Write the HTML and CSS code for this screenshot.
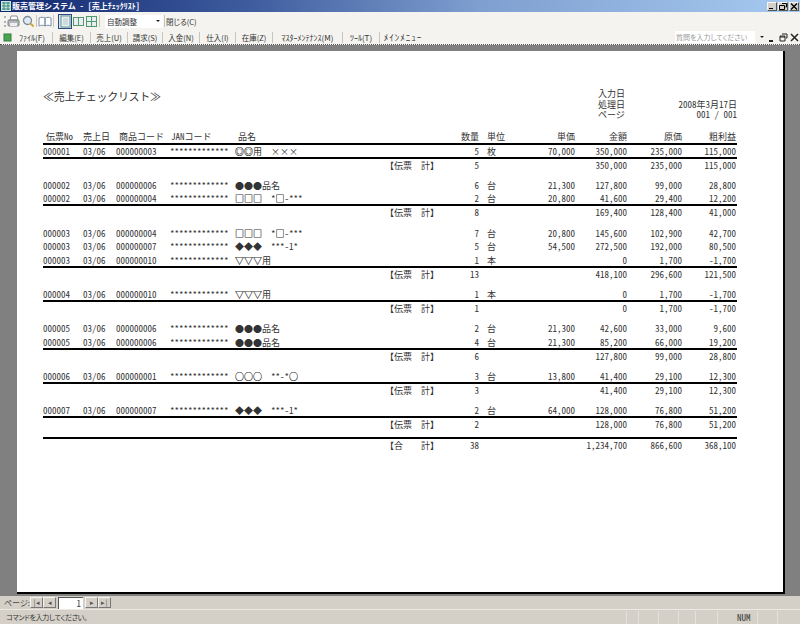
FILE: index.html
```html
<!DOCTYPE html>
<html lang="ja">
<head>
    <meta charset="UTF-8">
    <link rel="stylesheet" href="styles.css">
</head>
<body>
<div class="window">

    <div class="titlebar">
        <svg class="app-icon" width="10" height="10" viewBox="0 0 10 10"><rect width="10" height="10" fill="#cfe3d8"/><path d="M1 2h8M1 5h8M1 8h8M3 1v8M7 1v8" stroke="#2f8f7f"/></svg>
        <span class="title-text">販売管理システム － [売上ﾁｪｯｸﾘｽﾄ]</span>
        <div class="win-btns">
            <span class="win-btn"><svg width="8" height="7" viewBox="0 0 8 7"><path d="M1 5h4v1H1z" fill="#000"/></svg></span>
            <span class="win-btn"><svg width="8" height="7" viewBox="0 0 8 7"><path d="M3 .5h4.500v3.500H6.500M.5 2.500h5v4h-5z" fill="none" stroke="#000"/></svg></span>
            <span class="win-btn"><svg width="8" height="7" viewBox="0 0 8 7"><path d="M1 .5l6 6M7 .5l-6 6" stroke="#000" stroke-width="1.300"/></svg></span>
        </div>
    </div>

    <div class="toolbar">
        <span class="grip"></span>
        <svg width="13" height="13" viewBox="0 0 13 13"><path d="M4 1h6l1 4H3z" fill="#fff" stroke="#8a8f98"/><rect x="1" y="5" width="11" height="6" rx="1" fill="#b4b9c0" stroke="#7b8087"/><rect x="3" y="8" width="7" height="3" fill="#eeeeee"/><path d="M9 6h2" stroke="#5fc05f"/></svg>
        <svg class="tool-zoom" width="13" height="13" viewBox="0 0 13 13"><circle cx="5.500" cy="5.500" r="4" fill="#dfeaf6" stroke="#7d8a9a" stroke-width="1.300"/><path d="M8.500 8.500l3 3" stroke="#d9a531" stroke-width="2"/></svg>
        <span class="tool-sep"></span>
        <svg width="14" height="13" viewBox="0 0 14 13"><path d="M1 3c2-1 4-1 6 0v8c-2-1-4-1-6 0zM7 3c2-1 4-1 6 0v8c-2-1-4-1-6 0z" fill="#fff" stroke="#7c8ea8"/></svg>
        <span class="tool-sep"></span>
        <span class="tool-active"><svg width="11" height="13" viewBox="0 0 11 13"><rect x="1" y="1" width="9" height="11" fill="#e8eef2" stroke="#5b9a86"/><rect x="3" y="3" width="5" height="7" fill="#cfd9e0"/></svg></span>
        <svg width="13" height="13" viewBox="0 0 13 13"><rect x="1" y="2" width="11" height="9" fill="#4f9a6f"/><rect x="2" y="3" width="4" height="7" fill="#e8eef2"/><rect x="7" y="3" width="4" height="7" fill="#e8eef2"/></svg>
        <svg width="13" height="13" viewBox="0 0 13 13"><rect x="1" y="1" width="11" height="11" fill="#4f9a6f"/><rect x="2" y="2" width="4" height="4" fill="#e8eef2"/><rect x="7" y="2" width="4" height="4" fill="#e8eef2"/><rect x="2" y="7" width="4" height="4" fill="#e8eef2"/><rect x="7" y="7" width="4" height="4" fill="#e8eef2"/></svg>
        <span class="tool-sep"></span>
        <span class="zoom-box"><span class="zoom-value">自動調整</span><span class="zoom-arrow"></span></span>
        <span class="tool-sep"></span>
        <span class="tool-text">閉じる(C)</span>
    </div>

    <div class="menubar">
        <svg width="9" height="9" viewBox="0 0 9 9"><rect x="1" y="1" width="7" height="7" fill="#49a64f" stroke="#2f7d3a"/></svg>
        <span class="menu-item kana m-file">ﾌｧｲﾙ(F)</span><span class="menu-sep"></span>
        <span class="menu-item m-edit">編集(E)</span><span class="menu-sep"></span>
        <span class="menu-item m-sales">売上(U)</span><span class="menu-sep"></span>
        <span class="menu-item m-bill">請求(S)</span><span class="menu-sep"></span>
        <span class="menu-item m-sales">入金(N)</span><span class="menu-sep"></span>
        <span class="menu-item m-buy">仕入(I)</span><span class="menu-sep"></span>
        <span class="menu-item m-sales">在庫(Z)</span><span class="menu-sep"></span>
        <span class="menu-item kana m-master">ﾏｽﾀｰﾒﾝﾃﾅﾝｽ(M)</span><span class="menu-sep"></span>
        <span class="menu-item kana m-sales">ﾂｰﾙ(T)</span><span class="menu-sep"></span>
        <span class="menu-item m-main">ﾒｲﾝﾒﾆｭｰ</span>
        <div class="help">
            <span class="help-box">質問を入力してください</span>
            <span class="help-arrow"></span>
            <svg width="9" height="9" viewBox="0 0 9 9"><path d="M1 7h4v2H1z" fill="#222"/></svg>
            <svg width="9" height="9" viewBox="0 0 9 9"><path d="M3 1h5v4H7M1 3h5v5H1zM1 4h5" fill="none" stroke="#222"/></svg>
            <svg width="9" height="9" viewBox="0 0 9 9"><path d="M1 1l7 7M8 1l-7 7" stroke="#222" stroke-width="1.500"/></svg>
        </div>
    </div>

    <div class="viewer">
        <div class="paper">
            <div class="report-head">
                <div class="report-title">≪売上チェックリスト≫</div>
                <div class="report-meta">
                    <div class="meta-row"><span>入力日</span></div>
                    <div class="meta-row"><span>処理日</span><span>2008年3月17日</span></div>
                    <div class="meta-row"><span>ページ</span><span>001 / 001</span></div>
                </div>
            </div>

            <div class="row head">
                <span class="c-no">伝票No</span><span class="c-date">売上日</span><span class="c-code">商品コード</span><span class="c-jan">JANコード</span><span class="c-name">品名</span><span></span><span class="r">数量</span><span class="c-unit">単位</span><span class="r">単価</span><span class="r">金額</span><span class="r">原価</span><span class="r">粗利益</span>
            </div>
            <div class="rule first"></div>

            <div class="group">
                <div class="row"><span>000001</span><span>03/06</span><span>000000003</span><span>*************</span><span><span class="sym">◎◎</span>用<span class="zen">　</span>×××</span><span></span><span class="r">5</span><span class="c-unit">枚</span><span class="r">70,000</span><span class="r">350,000</span><span class="r">235,000</span><span class="r">115,000</span></div>
                <div class="rule"></div>
                <div class="row"><span></span><span></span><span></span><span></span><span></span><span>【伝票<span class="zen">　</span>計】</span><span class="r">5</span><span></span><span></span><span class="r">350,000</span><span class="r">235,000</span><span class="r">115,000</span></div>
            </div>

            <div class="group">
                <div class="row"><span>000002</span><span>03/06</span><span>000000006</span><span>*************</span><span>●●●品名</span><span></span><span class="r">6</span><span class="c-unit">台</span><span class="r">21,300</span><span class="r">127,800</span><span class="r">99,000</span><span class="r">28,800</span></div>
                <div class="row"><span>000002</span><span>03/06</span><span>000000004</span><span>*************</span><span><span class="sym">□□□</span><span class="zen">　</span>*<span class="sym">□</span>-***</span><span></span><span class="r">2</span><span class="c-unit">台</span><span class="r">20,800</span><span class="r">41,600</span><span class="r">29,400</span><span class="r">12,200</span></div>
                <div class="rule"></div>
                <div class="row"><span></span><span></span><span></span><span></span><span></span><span>【伝票<span class="zen">　</span>計】</span><span class="r">8</span><span></span><span></span><span class="r">169,400</span><span class="r">128,400</span><span class="r">41,000</span></div>
            </div>

            <div class="group">
                <div class="row"><span>000003</span><span>03/06</span><span>000000004</span><span>*************</span><span><span class="sym">□□□</span><span class="zen">　</span>*<span class="sym">□</span>-***</span><span></span><span class="r">7</span><span class="c-unit">台</span><span class="r">20,800</span><span class="r">145,600</span><span class="r">102,900</span><span class="r">42,700</span></div>
                <div class="row"><span>000003</span><span>03/06</span><span>000000007</span><span>*************</span><span>◆◆◆<span class="zen">　</span>***-1*</span><span></span><span class="r">5</span><span class="c-unit">台</span><span class="r">54,500</span><span class="r">272,500</span><span class="r">192,000</span><span class="r">80,500</span></div>
                <div class="row"><span>000003</span><span>03/06</span><span>000000010</span><span>*************</span><span><span class="sym">▽▽▽</span>用</span><span></span><span class="r">1</span><span class="c-unit">本</span><span></span><span class="r">0</span><span class="r">1,700</span><span class="r">-1,700</span></div>
                <div class="rule"></div>
                <div class="row"><span></span><span></span><span></span><span></span><span></span><span>【伝票<span class="zen">　</span>計】</span><span class="r">13</span><span></span><span></span><span class="r">418,100</span><span class="r">296,600</span><span class="r">121,500</span></div>
            </div>

            <div class="group">
                <div class="row"><span>000004</span><span>03/06</span><span>000000010</span><span>*************</span><span><span class="sym">▽▽▽</span>用</span><span></span><span class="r">1</span><span class="c-unit">本</span><span></span><span class="r">0</span><span class="r">1,700</span><span class="r">-1,700</span></div>
                <div class="rule"></div>
                <div class="row"><span></span><span></span><span></span><span></span><span></span><span>【伝票<span class="zen">　</span>計】</span><span class="r">1</span><span></span><span></span><span class="r">0</span><span class="r">1,700</span><span class="r">-1,700</span></div>
            </div>

            <div class="group">
                <div class="row"><span>000005</span><span>03/06</span><span>000000006</span><span>*************</span><span>●●●品名</span><span></span><span class="r">2</span><span class="c-unit">台</span><span class="r">21,300</span><span class="r">42,600</span><span class="r">33,000</span><span class="r">9,600</span></div>
                <div class="row"><span>000005</span><span>03/06</span><span>000000006</span><span>*************</span><span>●●●品名</span><span></span><span class="r">4</span><span class="c-unit">台</span><span class="r">21,300</span><span class="r">85,200</span><span class="r">66,000</span><span class="r">19,200</span></div>
                <div class="rule"></div>
                <div class="row"><span></span><span></span><span></span><span></span><span></span><span>【伝票<span class="zen">　</span>計】</span><span class="r">6</span><span></span><span></span><span class="r">127,800</span><span class="r">99,000</span><span class="r">28,800</span></div>
            </div>

            <div class="group">
                <div class="row"><span>000006</span><span>03/06</span><span>000000001</span><span>*************</span><span><span class="sym">○○○</span><span class="zen">　</span>**-*<span class="sym">○</span></span><span></span><span class="r">3</span><span class="c-unit">台</span><span class="r">13,800</span><span class="r">41,400</span><span class="r">29,100</span><span class="r">12,300</span></div>
                <div class="rule"></div>
                <div class="row"><span></span><span></span><span></span><span></span><span></span><span>【伝票<span class="zen">　</span>計】</span><span class="r">3</span><span></span><span></span><span class="r">41,400</span><span class="r">29,100</span><span class="r">12,300</span></div>
            </div>

            <div class="group">
                <div class="row"><span>000007</span><span>03/06</span><span>000000007</span><span>*************</span><span>◆◆◆<span class="zen">　</span>***-1*</span><span></span><span class="r">2</span><span class="c-unit">台</span><span class="r">64,000</span><span class="r">128,000</span><span class="r">76,800</span><span class="r">51,200</span></div>
                <div class="rule"></div>
                <div class="row"><span></span><span></span><span></span><span></span><span></span><span>【伝票<span class="zen">　</span>計】</span><span class="r">2</span><span></span><span></span><span class="r">128,000</span><span class="r">76,800</span><span class="r">51,200</span></div>
            </div>

            <div class="rule"></div>
            <div class="row"><span></span><span></span><span></span><span></span><span></span><span>【合<span class="zen">　　</span>計】</span><span class="r">38</span><span></span><span></span><span class="r">1,234,700</span><span class="r">866,600</span><span class="r">368,100</span></div>
        </div>
    </div>

    <div class="pager">
        <span class="pager-label">ページ:</span>
        <span class="page-btn">|◂</span><span class="page-btn">◂</span>
        <span class="page-input">1</span>
        <span class="page-btn">▸</span><span class="page-btn">▸|</span>
    </div>

    <div class="statusbar">
        <span class="status-text">コマンドを入力してください。</span>
        <span class="status-cell s-12"></span>
        <span class="status-cell s-20"></span>
        <span class="status-cell s-20"></span>
        <span class="status-cell s-17"></span>
        <span class="status-cell s-22"></span>
        <span class="status-cell s-num">NUM</span>
        <span class="status-cell s-20"></span>
        <span class="status-cell s-20"></span>
    </div>

</div>
</body>
</html>
```

FILE: styles.css
```css
* {
    box-sizing: border-box;
}

body {
    margin: 0;
    font-family: "Noto Sans CJK JP", "Liberation Sans", sans-serif;
    font-size: 9px;
    font-feature-settings: "hwid";
    color: #333;
    background-color: #808080;
}

.window {
    width: 800px;
    height: 624px;
    display: flex;
    flex-direction: column;
    overflow: hidden;
}

/* Title bar */
.titlebar {
    height: 12px;
    display: flex;
    align-items: center;
    padding-left: 1px;
    background: linear-gradient(to right, #11276f 0%, #3c5a9c 30%, #7f9fd0 60%, #a6caf0 100%);
    color: #ffffff;
    line-height: 12px;
}

.app-icon {
    margin-right: 1px;
}

.title-text {
    font-size: 8px;
    font-weight: 700;
    white-space: nowrap;
}

.win-btns {
    margin-left: auto;
    display: flex;
    gap: 1px;
    padding-right: 1px;
}

.win-btn {
    width: 10px;
    height: 9px;
    background-color: #d4d0c8;
    border: 1px solid;
    border-color: #f5f4f1 #555 #555 #f5f4f1;
    display: flex;
    align-items: center;
    justify-content: center;
}

/* Toolbars */
.toolbar {
    height: 18px;
    display: flex;
    align-items: center;
    background-color: #f4f3ef;
    padding-left: 4px;
}

.grip {
    width: 2px;
    height: 11px;
    margin-right: 1px;
    border-left: 2px dotted #b5b2a8;
}

.tool-zoom {
    margin-left: 2px;
}

.tool-sep {
    width: 1px;
    height: 12px;
    background-color: #c8c5bb;
    margin: 0 1px;
}

.tool-active {
    width: 14px;
    height: 15px;
    border: 1px solid #2c4a86;
    background-color: #d8dfea;
    display: flex;
    align-items: center;
    justify-content: center;
    margin-left: 3px;
}

.zoom-box {
    width: 58px;
    height: 13px;
    background-color: #ffffff;
    display: flex;
    align-items: center;
    padding-left: 2px;
    margin-left: 4px;
}

.zoom-value {
    font-size: 7.5px;
}

.zoom-arrow {
    margin-left: auto;
    margin-right: 3px;
    border-left: 2px solid transparent;
    border-right: 2px solid transparent;
    border-top: 2px solid #222;
}

.tool-text {
    font-size: 7.5px;
    font-feature-settings: "palt";
}

.menubar {
    height: 15px;
    display: flex;
    align-items: center;
    background-color: #f4f3ef;
    border-bottom: 1px dotted #555;
    padding-left: 3px;
    white-space: nowrap;
}

.menu-item {
    font-size: 7.5px;
    font-feature-settings: "palt";
    text-align: center;
}

.kana {
    font-size: 8px;
    font-feature-settings: normal;
}

.m-file {
    width: 40px;
}

.m-edit {
    width: 37px;
}

.m-sales {
    width: 36px;
}

.m-bill {
    width: 34px;
}

.m-buy {
    width: 35px;
}

.m-master {
    width: 69px;
}

.m-main {
    width: 46px;
    font-size: 9px;
    letter-spacing: 1px;
}

.menu-sep {
    width: 1px;
    height: 11px;
    background-color: #c8c5bb;
}

.help {
    margin-left: auto;
    display: flex;
    align-items: center;
    gap: 2px;
    padding-right: 1.5px;
}

.help-box {
    width: 80px;
    height: 12px;
    line-height: 12px;
    background-color: #ffffff;
    color: #9a9a9a;
    font-size: 7px;
    font-feature-settings: "palt";
    padding-left: 1px;
    margin-right: 3px;
}

.help-arrow {
    border-left: 2px solid transparent;
    border-right: 2px solid transparent;
    border-top: 2px solid #222;
    margin-right: 1.5px;
}

/* Report page */
.viewer {
    flex: 1;
    min-height: 0;
    padding: 6px 0 0 17px;
    background-color: #808080;
}

.paper {
    width: 768px;
    height: 543px;
    padding: 38px 0 0 26px;
    background-color: #ffffff;
    border-right: 2px solid #000000;
    border-bottom: 2px solid #000000;
}

.report-head {
    width: 694px;
    height: 31px;
    margin-bottom: 9px;
    display: flex;
    justify-content: space-between;
}

.report-title {
    font-size: 11px;
    letter-spacing: -0.3px;
    line-height: 14px;
}

.report-meta {
    width: 139px;
}

.meta-row {
    height: 10.5px;
    line-height: 10.5px;
    display: flex;
    justify-content: space-between;
}

.row {
    width: 694px;
    height: 13.5px;
    line-height: 13.5px;
    display: grid;
    grid-template-columns: 40px 33px 54px 65px 150px 72px 22px 48px 48px 52px 55px 54px;
    white-space: nowrap;
}

.head {
    line-height: 15px;
}

.r {
    text-align: right;
}

.c-unit {
    padding-left: 8px;
}

.head .c-no {
    padding-left: 3px;
}

.head .c-code {
    padding-left: 3px;
}

.head .c-jan {
    padding-left: 1px;
}

.head .c-name {
    padding-left: 3px;
}

/* Outlined symbols come out too pale in this font */
.sym {
    color: #000000;
    -webkit-text-stroke: 0.12px #000000;
}

/* Full width space, hwid would halve it */
.zen {
    font-feature-settings: normal;
}

.rule {
    width: 694px;
    height: 2px;
    margin-top: -1.5px;
    background-color: #000000;
}

.rule.first {
    margin-top: 0;
}

.group {
    margin-bottom: 6.8px;
}

/* Page navigation and status */
.pager {
    height: 13px;
    display: flex;
    align-items: center;
    background-color: #d4d0c8;
    padding-left: 4px;
    color: #444;
}

.pager-label {
    width: 26px;
    font-size: 8px;
    font-feature-settings: "palt";
    white-space: nowrap;
}

.page-btn {
    width: 13px;
    height: 11px;
    line-height: 9px;
    font-size: 7px;
    text-align: center;
    background-color: #d4d0c8;
    border: 1px solid;
    border-color: #f5f4f1 #777 #777 #f5f4f1;
    color: #555;
}

.page-input {
    width: 25px;
    height: 12px;
    line-height: 11px;
    margin: 0 2px;
    padding-right: 2px;
    text-align: right;
    background-color: #ffffff;
    border-top: 1px solid #555;
    border-left: 1px solid #555;
}

.statusbar {
    height: 15px;
    display: flex;
    align-items: center;
    background-color: #d4d0c8;
    border-top: 1px solid #ece9e2;
    padding-left: 6px;
    padding-right: 3px;
    color: #333;
}

.status-text {
    flex: 1;
    font-size: 7px;
    letter-spacing: -0.3px;
    font-feature-settings: "palt";
}

.status-cell {
    height: 13px;
    line-height: 13px;
    border-left: 1px solid #e4e1da;
}

.s-12 {
    width: 12px;
}

.s-17 {
    width: 17px;
}

.s-20 {
    width: 20px;
}

.s-22 {
    width: 22px;
}

.s-num {
    width: 40px;
    padding-left: 19px;
}
```
